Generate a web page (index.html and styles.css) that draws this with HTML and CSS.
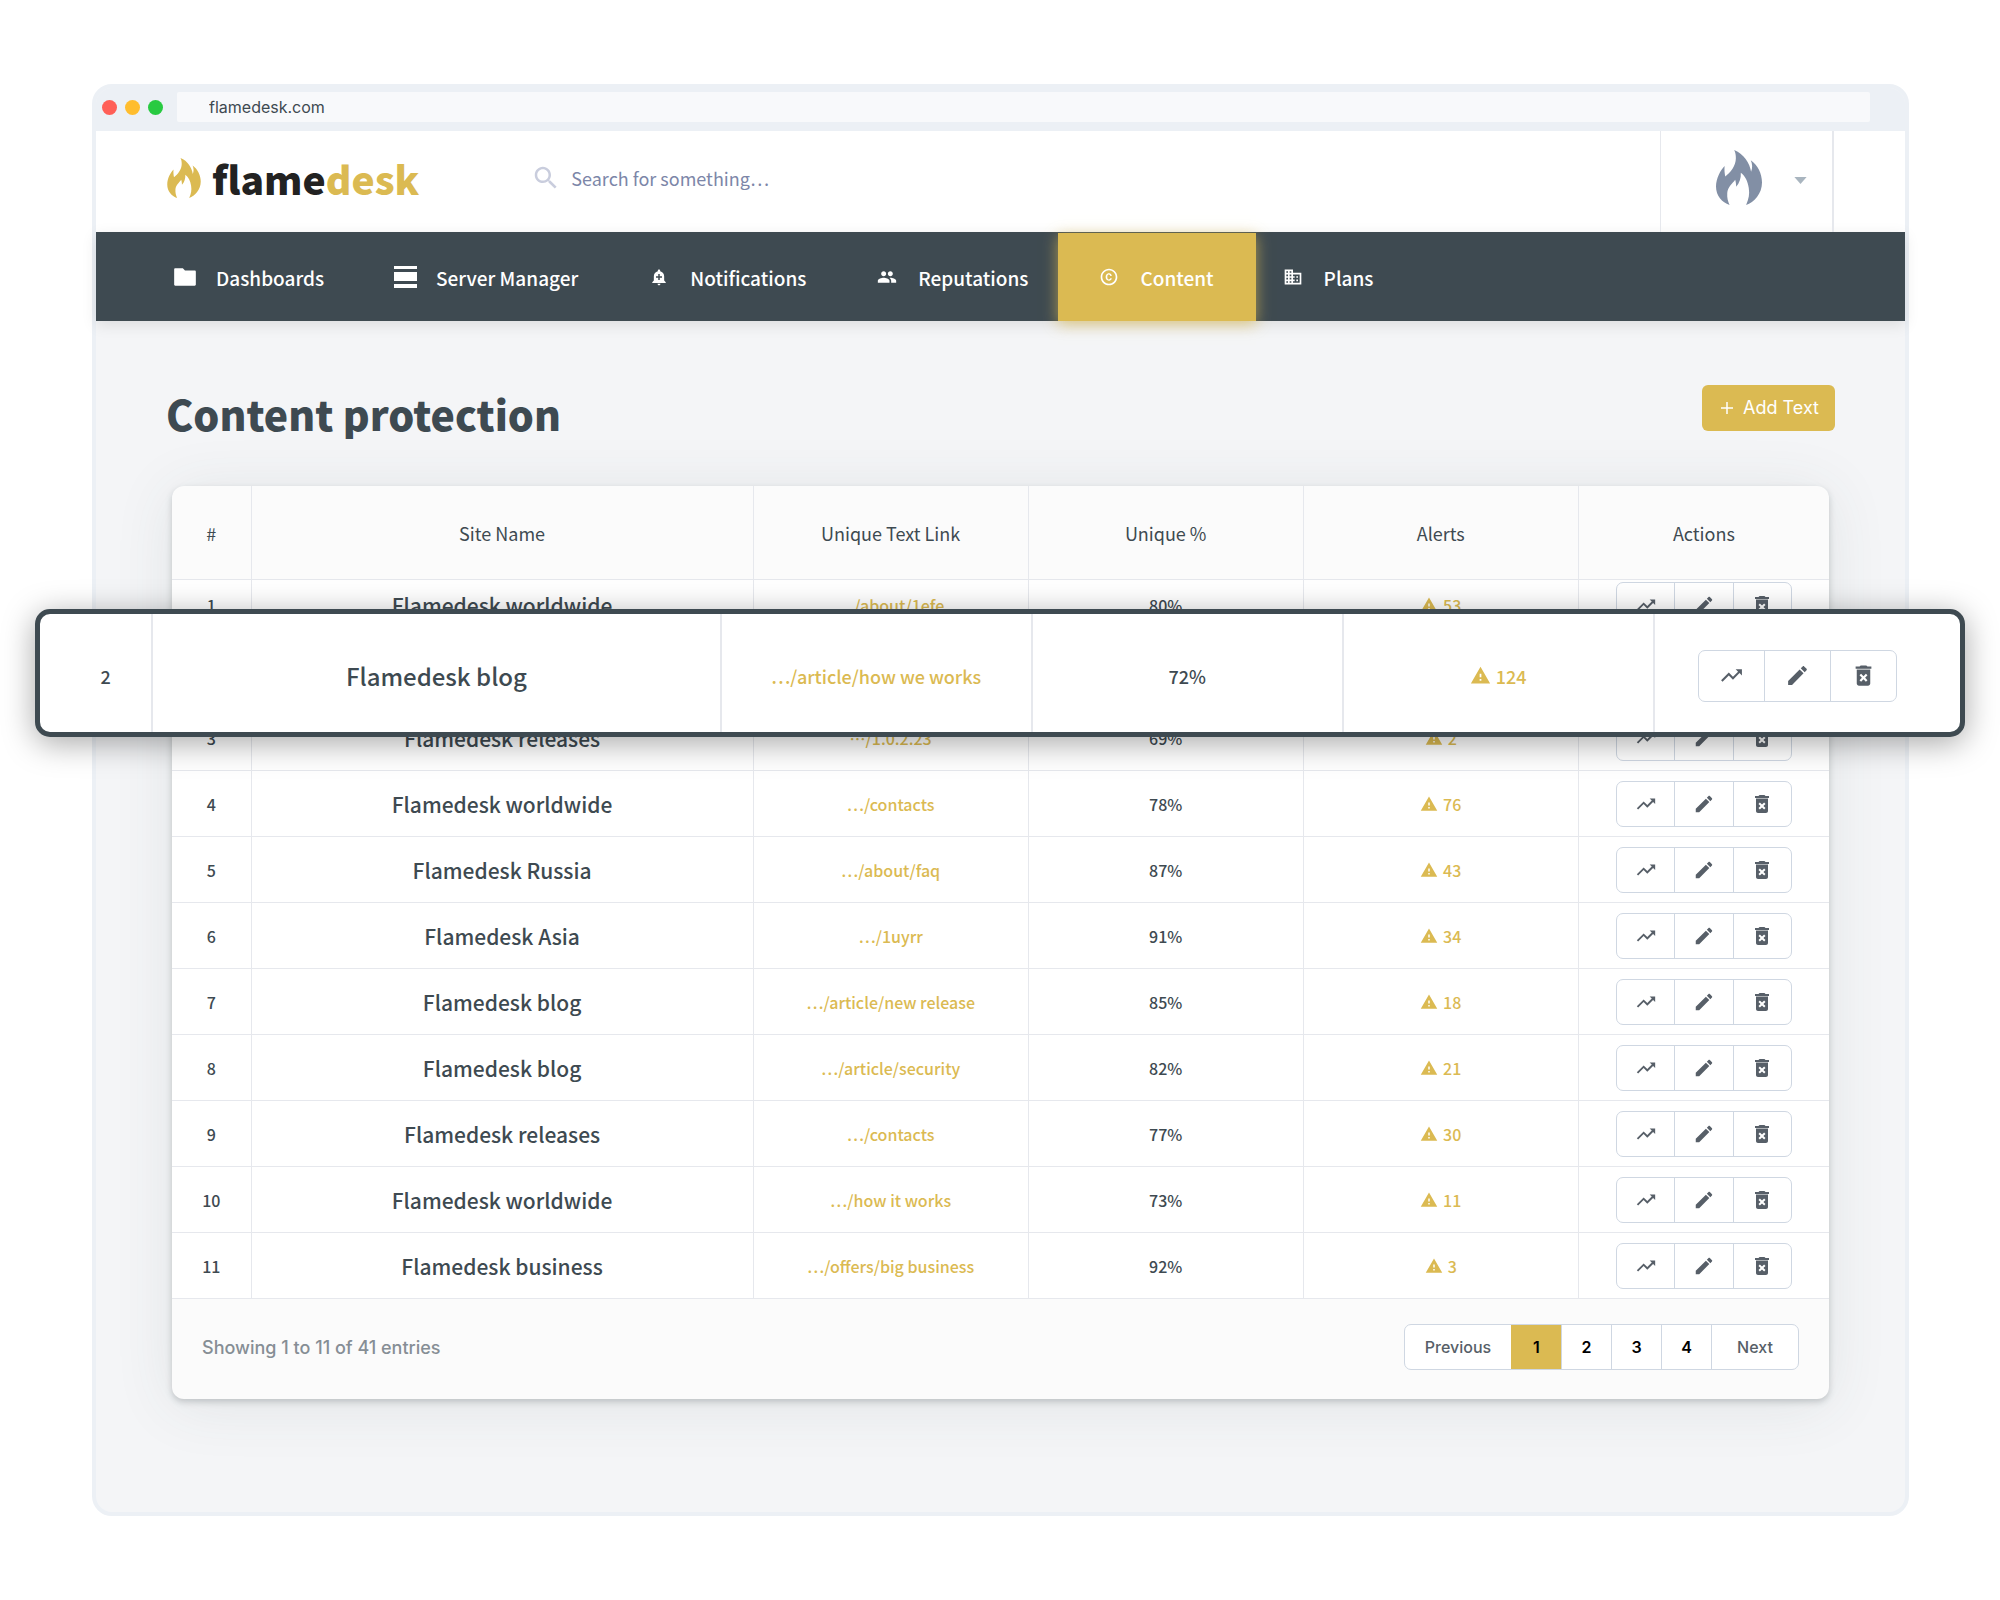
FILE: index.html
```html
<!DOCTYPE html>
<html lang="en">
<head>
<meta charset="utf-8">
<title>Content protection - flamedesk</title>
<link rel="stylesheet" href="styles.css">
</head>
<body>
<svg class="sprite" aria-hidden="true">
  <symbol id="flame" viewBox="0 0 139 166"><path d="M55 0C85 12 102 40 106 66C111 54 110 42 105 31C126 45 139 72 139 98C139 132 115 158 91 166C99 148 102 134 99 115C96 95 88 78 75 69C76 85 71 100 61 111C61 105 60 96 58 90C50 101 35 113 34 130C33 145 36 155 41 166C18 158 0 138 0 110C0 85 14 60 26 48C25 60 26 70 28 80C44 68 60 48 60 25C60 15 59 8 55 0Z"/></symbol>
  <symbol id="search" viewBox="0 0 24 24"><path d="M15.5 14h-.79l-.28-.27C15.41 12.59 16 11.11 16 9.5 16 5.91 13.09 3 9.5 3S3 5.91 3 9.5 5.91 16 9.5 16c1.61 0 3.09-.59 4.23-1.57l.27.28v.79l5 4.99L20.49 19l-4.99-5zm-6 0C7.01 14 5 11.99 5 9.5S7.01 5 9.5 5 14 7.01 14 9.5 11.99 14 9.5 14z"/></symbol>
  <symbol id="caret" viewBox="0 0 14 8"><path d="M0 0h14L7 8z"/></symbol>
  <symbol id="folder" viewBox="0 0 24 24"><path d="M10 4H3c-.6 0-1 .4-1 1v14c0 .6.4 1 1 1h18c.6 0 1-.4 1-1V7c0-.6-.4-1-1-1h-9l-2-2z"/></symbol>
  <symbol id="server" viewBox="0 0 23 22"><path d="M0 0h23v3H0zM0 6h23v9H0zM0 18h23v4H0z"/></symbol>
  <symbol id="bell" viewBox="0 0 24 24"><path d="M10.01 21.01c0 1.1.89 1.99 1.99 1.99s1.99-.89 1.99-1.99h-3.98zm8.87-4.19V11c0-3.25-2.25-5.97-5.29-6.69v-.72C13.59 2.71 12.88 2 12 2s-1.59.71-1.59 1.59v.72C7.37 5.03 5.12 7.75 5.12 11v5.82L3 18.94V20h18v-1.06l-2.12-2.12zM16 13.01h-3v3h-2v-3H8V11h3V8h2v3h3v2.01z"/></symbol>
  <symbol id="people" viewBox="0 0 24 24"><path d="M16 11c1.66 0 2.99-1.34 2.99-3S17.66 5 16 5c-1.66 0-3 1.34-3 3s1.34 3 3 3zm-8 0c1.66 0 2.99-1.34 2.99-3S9.66 5 8 5C6.34 5 5 6.34 5 8s1.34 3 3 3zm0 2c-2.33 0-7 1.17-7 3.5V19h14v-2.5c0-2.33-4.67-3.5-7-3.5zm8 0c-.29 0-.62.02-.97.05 1.16.84 1.97 1.97 1.97 3.45V19h6v-2.5c0-2.33-4.67-3.5-7-3.5z"/></symbol>
  <symbol id="copyright" viewBox="0 0 24 24"><path d="M10.08 10.86c.05-.33.16-.62.3-.87s.34-.46.59-.62c.24-.15.54-.22.91-.23.23.01.44.05.63.13.2.09.38.21.52.36s.25.33.34.53.13.42.14.64h1.79c-.02-.47-.11-.9-.28-1.29s-.4-.73-.7-1.01-.66-.5-1.08-.66-.88-.23-1.39-.23c-.65 0-1.22.11-1.7.34s-.88.53-1.2.92-.56.84-.71 1.36S8 11.29 8 11.87v.27c0 .58.08 1.12.23 1.64s.39.97.71 1.35.72.69 1.2.91 1.05.34 1.7.34c.47 0 .91-.08 1.32-.23s.77-.36 1.08-.63.56-.58.74-.94.29-.74.3-1.15h-1.79c-.01.21-.06.4-.15.58s-.21.33-.36.46-.32.23-.52.3c-.19.07-.39.09-.6.1-.36-.01-.66-.08-.89-.23-.25-.16-.45-.37-.59-.62s-.25-.55-.3-.88-.08-.67-.08-1v-.27c0-.35.03-.68.08-1.01zM12 2C6.48 2 2 6.48 2 12s4.48 10 10 10 10-4.48 10-10S17.52 2 12 2zm0 18c-4.41 0-8-3.59-8-8s3.59-8 8-8 8 3.59 8 8-3.59 8-8 8z"/></symbol>
  <symbol id="building" viewBox="0 0 24 24"><path d="M12 7V3H2v18h20V7H12zM6 19H4v-2h2v2zm0-4H4v-2h2v2zm0-4H4V9h2v2zm0-4H4V5h2v2zm4 12H8v-2h2v2zm0-4H8v-2h2v2zm0-4H8V9h2v2zm0-4H8V5h2v2zm10 12h-8v-2h2v-2h-2v-2h2v-2h-2V9h8v10zm-2-8h-2v2h2v-2zm0 4h-2v2h2v-2z"/></symbol>
  <symbol id="trend" viewBox="0 0 24 24"><path d="M16 6l2.29 2.29-4.88 4.88-4-4L2 16.59 3.41 18l6-6 4 4 6.3-6.29L22 12V6z"/></symbol>
  <symbol id="edit" viewBox="0 0 24 24"><path d="M3 17.25V21h3.75L17.81 9.94l-3.75-3.75L3 17.25zM20.71 7.04c.39-.39.39-1.02 0-1.41l-2.34-2.34c-.39-.39-1.02-.39-1.41 0l-1.83 1.83 3.75 3.75 1.83-1.83z"/></symbol>
  <symbol id="trash" viewBox="0 0 24 24"><path d="M6 19c0 1.1.9 2 2 2h8c1.1 0 2-.9 2-2V7H6v12zm2.46-7.12l1.41-1.41L12 12.59l2.12-2.12 1.41 1.41L13.41 14l2.12 2.12-1.41 1.41L12 15.41l-2.12 2.12-1.41-1.41L10.59 14l-2.13-2.12zM15.5 4l-1-1h-5l-1 1H5v2h14V4z"/><path d="M6 6h12v1H6z" opacity=".5"/></symbol>
  <symbol id="warn" viewBox="0 0 24 24"><path d="M1 21h22L12 2 1 21zm12-3h-2v-2h2v2zm0-4h-2v-4h2v4z"/></symbol>
</svg>

<div class="window">
  <div class="titlebar">
    <span class="dot dot-red"></span><span class="dot dot-yellow"></span><span class="dot dot-green"></span>
    <input class="url" type="text" value="flamedesk.com" aria-label="Address">
  </div>

  <header class="header">
    <a class="logo" href="#"><svg><use href="#flame"/></svg><span class="logo-text">flame<b>desk</b></span></a>
    <label class="search"><svg><use href="#search"/></svg><input type="search" placeholder="Search for something…" aria-label="Search"></label>
    <button class="profile" type="button" aria-label="Account"><svg class="profile-flame"><use href="#flame"/></svg><svg class="profile-caret"><use href="#caret"/></svg></button>
  </header>

  <nav class="nav">
    <a href="#"><span class="nav-icon"><svg class="i26"><use href="#folder"/></svg></span>Dashboards</a>
    <a href="#"><span class="nav-icon"><svg class="i-server"><use href="#server"/></svg></span>Server Manager</a>
    <a href="#"><span class="nav-icon"><svg class="i18"><use href="#bell"/></svg></span>Notifications</a>
    <a href="#"><span class="nav-icon"><svg class="i20"><use href="#people"/></svg></span>Reputations</a>
    <a href="#" class="active"><span class="nav-icon"><svg class="i20"><use href="#copyright"/></svg></span>Content</a>
    <a href="#"><span class="nav-icon"><svg class="i20"><use href="#building"/></svg></span>Plans</a>
  </nav>

  <main class="page">
    <div class="page-head">
      <h1>Content protection</h1>
      <button class="add" type="button"><svg viewBox="0 0 12 12"><path d="M6 0v12M0 6h12"/></svg>Add Text</button>
    </div>

    <section class="card">
      <table class="grid">
        <colgroup><col class="c-num"><col class="c-name"><col class="c-mid"><col class="c-mid"><col class="c-mid"><col></colgroup>
        <thead>
          <tr><th>#</th><th>Site Name</th><th>Unique Text Link</th><th>Unique %</th><th>Alerts</th><th>Actions</th></tr>
        </thead>
        <tbody>
          <tr class="first"><td>1</td><td class="name">Flamedesk worldwide</td><td><a href="#">…/about/1efe</a></td><td>80%</td><td><span class="alert"><svg><use href="#warn"/></svg>53</span></td><td><div class="actions"><button type="button" aria-label="Statistics"><svg><use href="#trend"/></svg></button><button type="button" aria-label="Edit"><svg><use href="#edit"/></svg></button><button type="button" aria-label="Delete"><svg><use href="#trash"/></svg></button></div></td></tr>
          <tr aria-hidden="true"><td></td><td></td><td></td><td></td><td></td><td></td></tr>
          <tr><td>3</td><td class="name">Flamedesk releases</td><td><a href="#">…/1.0.2.23</a></td><td>69%</td><td><span class="alert"><svg><use href="#warn"/></svg>2</span></td><td><div class="actions"><button type="button" aria-label="Statistics"><svg><use href="#trend"/></svg></button><button type="button" aria-label="Edit"><svg><use href="#edit"/></svg></button><button type="button" aria-label="Delete"><svg><use href="#trash"/></svg></button></div></td></tr>
          <tr><td>4</td><td class="name">Flamedesk worldwide</td><td><a href="#">…/contacts</a></td><td>78%</td><td><span class="alert"><svg><use href="#warn"/></svg>76</span></td><td><div class="actions"><button type="button" aria-label="Statistics"><svg><use href="#trend"/></svg></button><button type="button" aria-label="Edit"><svg><use href="#edit"/></svg></button><button type="button" aria-label="Delete"><svg><use href="#trash"/></svg></button></div></td></tr>
          <tr><td>5</td><td class="name">Flamedesk Russia</td><td><a href="#">…/about/faq</a></td><td>87%</td><td><span class="alert"><svg><use href="#warn"/></svg>43</span></td><td><div class="actions"><button type="button" aria-label="Statistics"><svg><use href="#trend"/></svg></button><button type="button" aria-label="Edit"><svg><use href="#edit"/></svg></button><button type="button" aria-label="Delete"><svg><use href="#trash"/></svg></button></div></td></tr>
          <tr><td>6</td><td class="name">Flamedesk Asia</td><td><a href="#">…/1uyrr</a></td><td>91%</td><td><span class="alert"><svg><use href="#warn"/></svg>34</span></td><td><div class="actions"><button type="button" aria-label="Statistics"><svg><use href="#trend"/></svg></button><button type="button" aria-label="Edit"><svg><use href="#edit"/></svg></button><button type="button" aria-label="Delete"><svg><use href="#trash"/></svg></button></div></td></tr>
          <tr><td>7</td><td class="name">Flamedesk blog</td><td><a href="#">…/article/new release</a></td><td>85%</td><td><span class="alert"><svg><use href="#warn"/></svg>18</span></td><td><div class="actions"><button type="button" aria-label="Statistics"><svg><use href="#trend"/></svg></button><button type="button" aria-label="Edit"><svg><use href="#edit"/></svg></button><button type="button" aria-label="Delete"><svg><use href="#trash"/></svg></button></div></td></tr>
          <tr><td>8</td><td class="name">Flamedesk blog</td><td><a href="#">…/article/security</a></td><td>82%</td><td><span class="alert"><svg><use href="#warn"/></svg>21</span></td><td><div class="actions"><button type="button" aria-label="Statistics"><svg><use href="#trend"/></svg></button><button type="button" aria-label="Edit"><svg><use href="#edit"/></svg></button><button type="button" aria-label="Delete"><svg><use href="#trash"/></svg></button></div></td></tr>
          <tr><td>9</td><td class="name">Flamedesk releases</td><td><a href="#">…/contacts</a></td><td>77%</td><td><span class="alert"><svg><use href="#warn"/></svg>30</span></td><td><div class="actions"><button type="button" aria-label="Statistics"><svg><use href="#trend"/></svg></button><button type="button" aria-label="Edit"><svg><use href="#edit"/></svg></button><button type="button" aria-label="Delete"><svg><use href="#trash"/></svg></button></div></td></tr>
          <tr><td>10</td><td class="name">Flamedesk worldwide</td><td><a href="#">…/how it works</a></td><td>73%</td><td><span class="alert"><svg><use href="#warn"/></svg>11</span></td><td><div class="actions"><button type="button" aria-label="Statistics"><svg><use href="#trend"/></svg></button><button type="button" aria-label="Edit"><svg><use href="#edit"/></svg></button><button type="button" aria-label="Delete"><svg><use href="#trash"/></svg></button></div></td></tr>
          <tr><td>11</td><td class="name">Flamedesk business</td><td><a href="#">…/offers/big business</a></td><td>92%</td><td><span class="alert"><svg><use href="#warn"/></svg>3</span></td><td><div class="actions"><button type="button" aria-label="Statistics"><svg><use href="#trend"/></svg></button><button type="button" aria-label="Edit"><svg><use href="#edit"/></svg></button><button type="button" aria-label="Delete"><svg><use href="#trash"/></svg></button></div></td></tr>
        </tbody>
      </table>

      <footer class="card-foot">
        <p>Showing 1 to 11 of 41 entries</p>
        <div class="pager">
          <button type="button" class="prev">Previous</button><button type="button" class="num current" aria-current="page">1</button><button type="button" class="num">2</button><button type="button" class="num">3</button><button type="button" class="num">4</button><button type="button" class="next">Next</button>
        </div>
      </footer>

      <!-- enlarged copy of row 2, lifted over the table -->
      <div class="spotlight">
        <table class="grid" aria-label="Selected text">
          <colgroup><col class="s-num"><col class="s-name"><col class="s-mid"><col class="s-mid"><col class="s-mid"><col></colgroup>
          <tbody>
            <tr><td>2</td><td class="name">Flamedesk blog</td><td><a href="#">…/article/how we works</a></td><td>72%</td><td><span class="alert"><svg><use href="#warn"/></svg>124</span></td><td><div class="actions"><button type="button" aria-label="Statistics"><svg><use href="#trend"/></svg></button><button type="button" aria-label="Edit"><svg><use href="#edit"/></svg></button><button type="button" aria-label="Delete"><svg><use href="#trash"/></svg></button></div></td></tr>
          </tbody>
        </table>
      </div>
    </section>
  </main>
</div>
</body>
</html>
```
FILE: styles.css
```css
:root {
  --gold: #dbba52;
  --slate: #3e4a51;
  --line: #e6e8ed;
  --outline: #cfd7e2;
  --source: "Noto Sans CJK SC", "Source Sans Pro", sans-serif;
  --ui: Inter, sans-serif;
}

* { box-sizing: border-box; }

body {
  margin: 0;
  padding: 84px 91px 84px 92px;
  background: #fff;
  color: var(--slate);
  font-family: var(--source);
}

a { color: inherit; text-decoration: none; }
button, input { font: inherit; color: inherit; margin: 0; }
button { cursor: pointer; }
svg { display: block; fill: currentColor; flex: none; }
.sprite { position: absolute; width: 0; height: 0; }

.window {
  border: 4px solid #ecf0f5;
  border-radius: 20px;
  background: #f4f5f7;
}

/* browser bar */
.titlebar {
  display: flex;
  align-items: center;
  gap: 8px;
  padding: 4px 35px 9px 6px;
  background: #ecf0f5;
  border-radius: 16px 16px 0 0;
}
.dot { width: 15px; height: 15px; border-radius: 50%; flex: none; }
.dot-red { background: #ff5f57; }
.dot-yellow { background: #ffbd2e; }
.dot-green { background: #28ca41; }
.url {
  flex: 1;
  height: 30px;
  margin-left: 6px;
  padding: 0 32px;
  border: 0;
  border-radius: 2px;
  background: #f8f9fb;
  font-family: var(--ui);
  font-size: 16px;
}

/* header */
.header {
  display: flex;
  height: 101px;
  padding: 0 71px;
  background: #fff;
}
.logo { display: flex; align-items: center; gap: 11px; padding-bottom: 8px; color: var(--gold); }
.logo svg { width: 34px; height: 40px; }
.logo-text { color: #222; font-size: 39px; line-height: 56px; font-weight: 900; }
.logo-text b { color: var(--gold); font-weight: 900; }
.search {
  flex: 1;
  display: flex;
  align-items: center;
  gap: 10px;
  margin-left: 112px;
  padding-bottom: 8px;
  color: #7c86a8;
}
.search svg { width: 30px; height: 30px; color: #c9cddd; }
.search input { flex: 1; height: 40px; padding: 0; border: 0; outline: 0; background: none; font-size: 18px; }
.search input::placeholder { color: #7c86a8; opacity: 1; }
.profile {
  display: flex;
  align-items: center;
  gap: 32px;
  width: 174px;
  padding: 0 0 9px 55px;
  border: solid var(--line);
  border-width: 0 2px 0 1px;
  background: none;
}
.profile-flame { width: 46px; height: 55px; color: #828fa5; }
.profile-caret { width: 13px; height: 7px; margin-top: 7px; color: #a9b5bf; }

/* main menu */
.nav {
  display: flex;
  height: 89px;
  padding: 1px 0 0 38px;
  background: var(--slate);
  color: #fff;
  box-shadow: 0 4px 14px rgba(0, 0, 0, .1);
}
.nav a {
  display: flex;
  align-items: center;
  gap: 18px;
  padding: 0 30px 0 38px;
  font-size: 19px;
  font-weight: 500;
}
.nav a.active {
  margin-right: -14px;
  padding-right: 42px;
  background: var(--gold);
  box-shadow: 0 3px 14px rgba(219, 186, 82, .7);
}
.nav-icon { display: flex; justify-content: center; width: 26px; }
.i26 { width: 26px; height: 26px; }
.i20 { width: 20px; height: 20px; }
.i18 { width: 18px; height: 18px; }
.i-server { width: 23px; height: 22px; }

/* page */
.page { padding: 64px 70px 113px; }
.page-head { display: flex; justify-content: space-between; align-items: flex-start; margin-bottom: 45px; }
h1 { margin: 0; font-size: 41px; line-height: 56px; font-weight: 900; }
.add {
  display: flex;
  align-items: center;
  gap: 10px;
  height: 46px;
  padding: 0 16px 1px 19px;
  border: 0;
  border-radius: 6px;
  background: var(--gold);
  color: #fff;
  font-family: var(--ui);
  font-size: 18px;
}
.add svg { width: 12px; height: 12px; stroke: #fff; stroke-width: 1.5; }

.card {
  position: relative;
  margin: 0 6px;
  border-radius: 12px;
  background: #fbfbfb;
  box-shadow: 0 3px 6px rgba(62, 74, 81, .25), 0 6px 60px rgba(62, 74, 81, .1);
}
.grid { width: 100%; table-layout: fixed; border-collapse: separate; border-spacing: 0; font-size: 16px; text-align: center; }
.c-num { width: 4.8%; }
.c-name { width: 30.3%; }
.c-mid { width: 16.6%; }
.grid th, .grid td { padding: 0; border: solid var(--line); border-width: 0 1px 1px 0; }
.grid th:last-child, .grid td:last-child { border-right: 0; }
.grid th { height: 94px; font-size: 18px; font-weight: 400; }
.grid td { height: 66px; background: #fff; font-weight: 500; }
.grid .first td { height: 59px; padding-bottom: 8px; }
.grid .name { font-size: 21px; }
.grid td a, .alert { color: var(--gold); }
.alert { display: flex; justify-content: center; align-items: center; gap: 5px; }
.alert svg { width: 18px; height: 18px; }

.actions {
  display: flex;
  width: 176px;
  height: 46px;
  margin: 0 auto;
  border: 1px solid var(--outline);
  border-radius: 7px;
  color: #575f68;
}
.actions button {
  flex: 1;
  display: flex;
  align-items: center;
  justify-content: center;
  padding: 0;
  border: 0;
  background: none;
}
.actions button + button { border-left: 1px solid var(--outline); }
.actions svg { width: 22px; height: 22px; }
.actions button:last-child svg { width: 24px; height: 24px; }

.card-foot {
  display: flex;
  align-items: center;
  justify-content: space-between;
  height: 100px;
  padding: 0 30px 4px;
  font-family: var(--ui);
}
.card-foot p { margin: 0; color: #868e95; font-size: 18px; font-weight: 500; }
.pager {
  display: flex;
  height: 46px;
  border: 1px solid var(--outline);
  border-radius: 7px;
  background: #fff;
  overflow: hidden;
}
.pager button { padding: 0; border: 0; background: none; color: #575f68; font-size: 16px; font-weight: 500; }
.pager button + button { border-left: 1px solid var(--outline); }
.pager .prev { width: 106px; }
.pager .next { width: 87px; }
.pager .num { width: 50px; color: #000; font-weight: 600; }
.pager .current { border-color: var(--gold); background: var(--gold); }

/* enlarged row */
.spotlight {
  position: absolute;
  top: 123px;
  left: -137px;
  right: -136px;
  border: 5px solid var(--slate);
  border-radius: 15px;
  background: #fff;
  box-shadow: 0 6px 32px rgba(0, 0, 0, .35);
}
.s-num { width: 5.9%; }
.s-name { width: 29.6%; }
.s-mid { width: 16.2%; }
.spotlight .grid { font-size: 18px; }
.spotlight .grid td { height: 118px; padding-top: 5px; border-width: 0 2px 0 0; background: none; }
.spotlight .grid td:first-child { padding-left: 20px; }
.spotlight .grid td:last-child { padding-right: 20px; border-right: 0; }
.spotlight .grid .name { font-size: 24px; }
.spotlight .alert svg { width: 21px; height: 21px; }
.spotlight .actions { width: 199px; height: 52px; }
.spotlight .actions svg { width: 25px; height: 25px; }
.spotlight .actions button:last-child svg { width: 27px; height: 27px; }
```
